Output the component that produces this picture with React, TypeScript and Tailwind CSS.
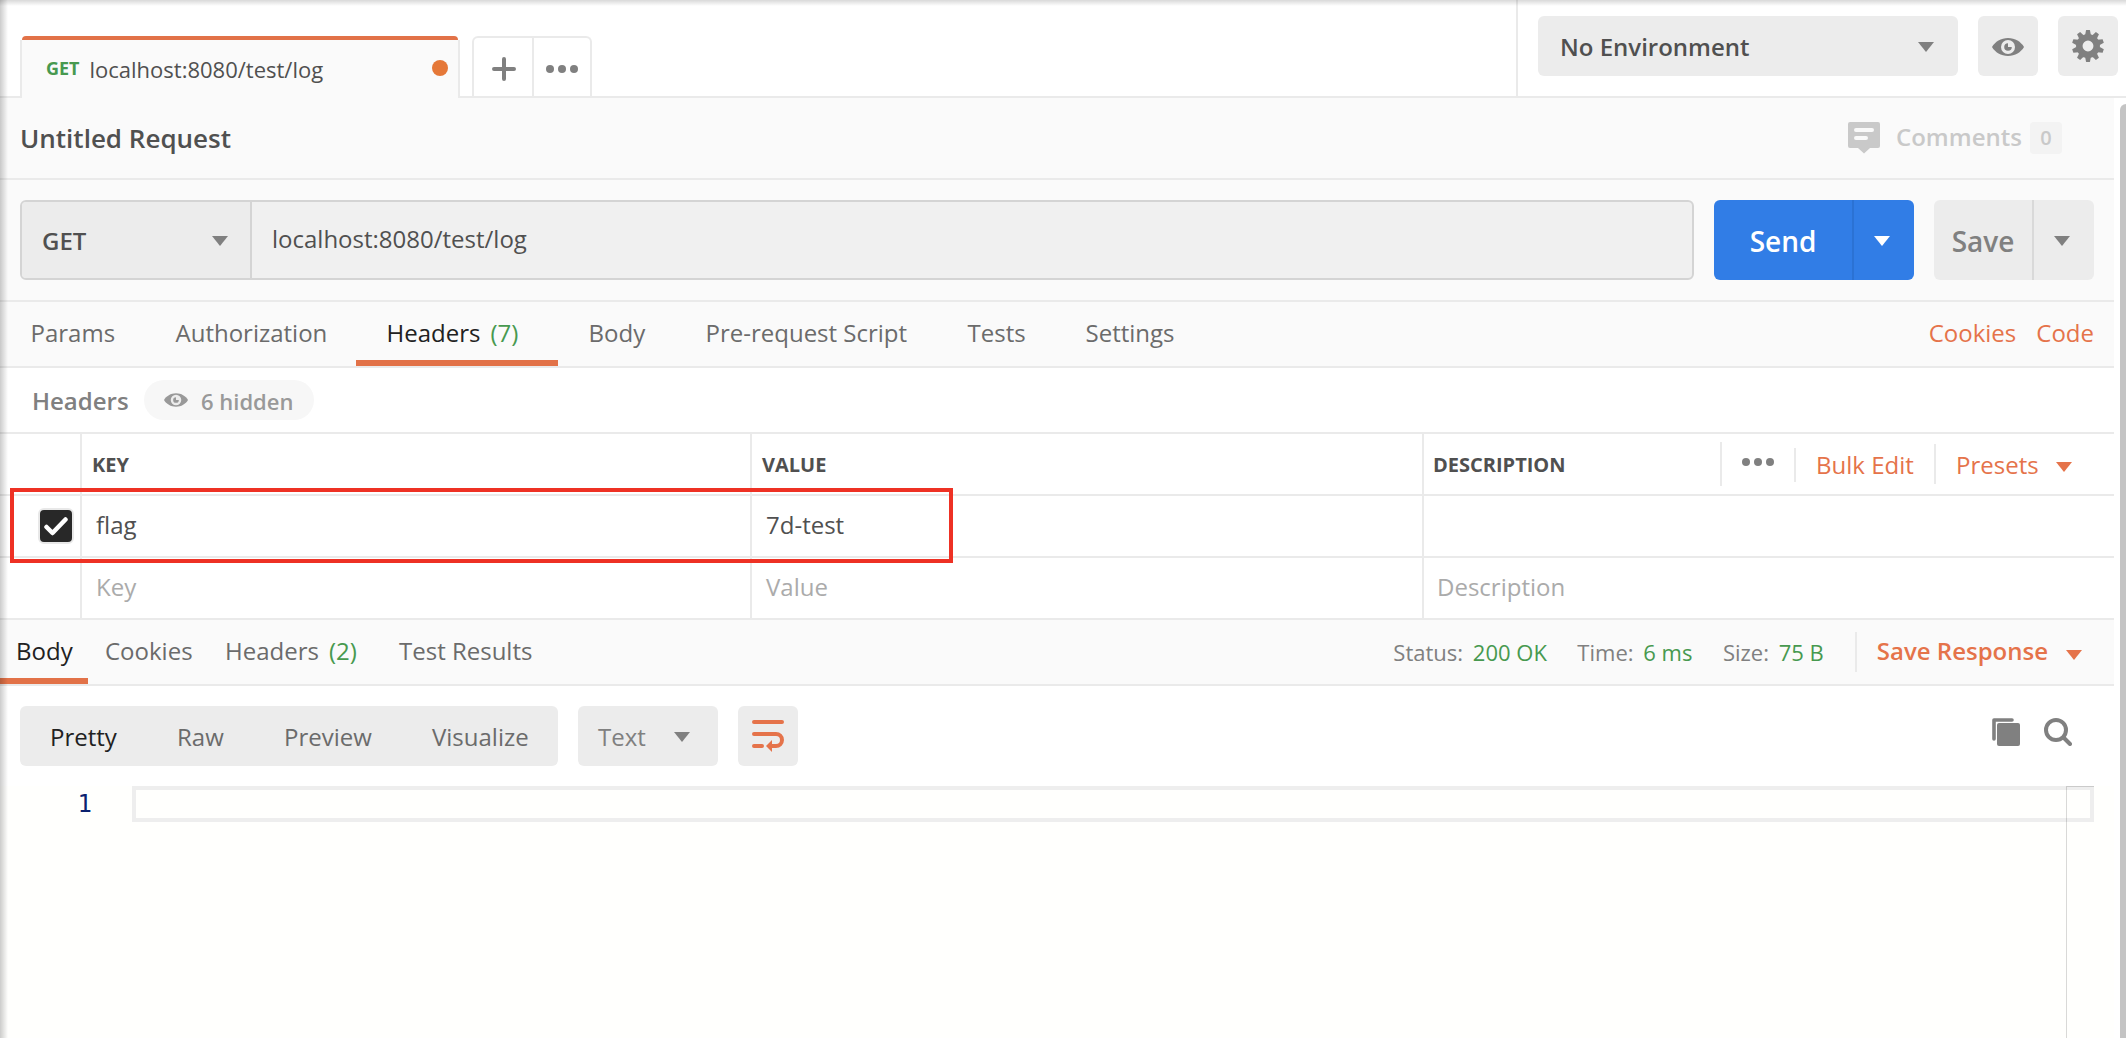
import { useState } from "react";
import type { ReactNode } from "react";

const requestTabs = [
  { name: "Params", width: "w-[145px]" },
  { name: "Authorization", width: "w-[211px]" },
  { name: "Headers", count: 7, width: "w-[202px]" },
  { name: "Body", width: "w-[117px]" },
  { name: "Pre-request Script", width: "w-[262px]" },
  { name: "Tests", width: "w-[118px]" },
  { name: "Settings", width: "w-[150px]" },
];

const responseTabs = [
  { name: "Body", width: "w-[88px] mr-px" },
  { name: "Cookies", width: "w-[120px]" },
  { name: "Headers", count: 2, width: "w-[174px]" },
  { name: "Test Results", width: "w-[170px]" },
];

const viewModes = [
  { name: "Pretty", width: "w-[127px]" },
  { name: "Raw", width: "w-[107px]" },
  { name: "Preview", width: "w-[148px]" },
  { name: "Visualize", width: "w-[156px]" },
];

function Caret({ className = "" }: { className?: string }) {
  return (
    <svg className={`w-4 h-2.5 shrink-0 ${className}`} viewBox="0 0 16 10" fill="currentColor">
      <path d="M0 0h16L8 10z" />
    </svg>
  );
}

function Dots() {
  return (
    <svg className="w-8 h-2 shrink-0" viewBox="0 0 32 8" fill="#808080">
      <circle cx="4" cy="4" r="4" />
      <circle cx="16" cy="4" r="4" />
      <circle cx="28" cy="4" r="4" />
    </svg>
  );
}

function EyeIcon({ className = "" }: { className?: string }) {
  return (
    <svg className={className} viewBox="0 0 32 18">
      <path
        d="M16 0C9 0 3 3.800 0 9c3 5.200 9 9 16 9s13-3.800 16-9C29 3.800 23 0 16 0z"
        fill="currentColor"
      />
      <circle cx="16" cy="9" r="7" fill="#ececec" />
      <path d="M16 5.200a3.800 3.800 0 1 0 3.800 3.800H16z" fill="currentColor" />
    </svg>
  );
}

function GearIcon() {
  return (
    <svg className="w-8 h-8" viewBox="-16 -16 32 32" fill="#808080">
      {Array.from({ length: 10 }, (_, i) => (
        <path key={i} d="M-2.900-11L-1.900-16h3.800L2.900-11z" transform={`rotate(${i * 36})`} />
      ))}
      <circle r="8.700" fill="none" stroke="#808080" strokeWidth="6.500" />
    </svg>
  );
}

function CommentIcon() {
  return (
    <svg className="w-8 h-8" viewBox="0 0 32 32">
      <path
        d="M2 0h28a2 2 0 0 1 2 2v22a2 2 0 0 1-2 2h-8l-6 5.500L10 26H2a2 2 0 0 1-2-2V2a2 2 0 0 1 2-2z"
        fill="#c9c9c9"
      />
      <path d="M8 8h16M8 16h10" stroke="#fafafa" strokeWidth="4" strokeLinecap="round" />
    </svg>
  );
}

function WrapIcon() {
  return (
    <svg className="w-8 h-8" viewBox="0 0 32 32" fill="none" stroke="#e5734a" strokeWidth="4">
      <path d="M2 2h28M2 14h22a6 6 0 0 1 0 12h-4M2 26h8" strokeLinecap="round" />
      <path d="M20 20v12l-6-6z" fill="#e5734a" stroke="none" />
    </svg>
  );
}

function CopyIcon() {
  return (
    <svg className="w-7 h-7" viewBox="0 0 28 28" fill="#808080">
      <rect x="5" y="5" width="23" height="23" rx="2" />
      <path d="M2 21V2h18" fill="none" stroke="#808080" strokeWidth="3.600" strokeLinecap="round" strokeLinejoin="round" />
    </svg>
  );
}

function SearchIcon() {
  return (
    <svg className="w-7 h-7" viewBox="0 0 28 28" fill="none" stroke="#808080" strokeWidth="4">
      <circle cx="12" cy="12" r="10" />
      <path d="M19.500 19.500l6.500 6.500" strokeLinecap="round" />
    </svg>
  );
}

function Count({ children }: { children: ReactNode }) {
  return <span className="ml-[10px] text-[#47994f]">({children})</span>;
}

function TopBar() {
  return (
    <header className="flex h-[98px] bg-white">
      <div className="w-5 border-b-2 border-[#eaeaea]" />
      <div className="flex flex-col w-[440px]">
        <div className="h-9" />
        <div className="mx-0.5 h-1 rounded-t-[4px] bg-[#e27248]" />
        <div className="flex flex-1 items-center border-x-2 border-[#eaeaea] bg-[#fafafa] pl-6 pr-2.5">
          <span className="w-[43.5px] pb-px text-[18px] font-bold text-[#47994f]">GET</span>
          <span className="flex-1 text-[22px] text-[#505050] pt-px">localhost:8080/test/log</span>
          <span className="size-4 mb-0.5 rounded-full bg-[#e57838]" />
        </div>
      </div>
      <div className="w-3 border-b-2 border-[#eaeaea]" />
      <div className="flex flex-1 items-end border-b-2 border-[#eaeaea]">
        <div className="flex w-[120px] h-[60px] rounded-t-[6px] border-2 border-b-0 border-[#eaeaea]">
          <button className="flex w-[60px] items-center justify-center border-r-2 border-[#eaeaea] pt-1 pl-0.5">
            <svg className="w-6 h-6" viewBox="0 0 24 24" stroke="#808080" strokeWidth="4" strokeLinecap="round">
              <path d="M12 2v20M2 12h20" />
            </svg>
          </button>
          <button className="flex flex-1 items-center justify-center pt-1">
            <Dots />
          </button>
        </div>
      </div>
      <div className="flex w-[610px] justify-end gap-5 border-b-2 border-l-2 border-[#eaeaea] pt-4 pr-2">
        <button className="flex h-[60px] w-[420px] items-center justify-between rounded-[6px] bg-[#ececec] pl-[22px] pr-6 text-2xl font-semibold text-[#505050]">
          <span className="pt-0.5">No Environment</span>
          <Caret className="mt-0.5 text-[#808080]" />
        </button>
        <button className="flex size-[60px] items-center justify-center rounded-[6px] bg-[#ececec] pt-0.5 text-[#808080]">
          <EyeIcon className="w-8 h-[18px]" />
        </button>
        <button className="flex size-[60px] items-center justify-center rounded-[6px] bg-[#ececec]">
          <GearIcon />
        </button>
      </div>
    </header>
  );
}

function TitleRow() {
  return (
    <div className="flex h-[82px] items-center justify-between border-b-2 border-[#eaeaea] bg-[#fafafa] pl-5 pr-[52px]">
      <h1 className="text-[26px] font-semibold text-[#505050]">Untitled Request</h1>
      <div className="flex items-center">
        <CommentIcon />
        <span className="ml-4 w-[134px] pb-[3px] text-2xl font-semibold text-[#c9c9c9]">Comments</span>
        <span className="flex size-8 items-center justify-center rounded-[4px] bg-[#f3f3f3] text-xl font-semibold text-[#c9c9c9]">
          0
        </span>
      </div>
    </div>
  );
}

function UrlBar() {
  return (
    <div className="flex h-[122px] gap-5 border-b-2 border-[#eaeaea] bg-[#fafafa] px-5 pt-5">
      <div className="flex h-20 flex-1 overflow-hidden rounded-[6px] border-2 border-[#d4d4d4] bg-[#f0f0f0] text-2xl text-[#505050]">
        <button className="flex w-[230px] items-center justify-between border-r-2 border-[#d4d4d4] bg-[#ececec] pl-5 pr-[22px]">
          <span className="pt-0.5 font-semibold">GET</span>
          <Caret className="mt-0.5 text-[#808080]" />
        </button>
        <span className="flex items-center pl-5 pb-0.5">localhost:8080/test/log</span>
      </div>
      <div className="flex h-20 w-[200px] overflow-hidden rounded-[6px] bg-[#317de6] text-white">
        <button className="w-[140px] border-r-2 border-[#2b72d4] pt-0.5 text-[28px] font-semibold">Send</button>
        <button className="flex flex-1 items-center justify-center pt-0.5 pr-1">
          <Caret />
        </button>
      </div>
      <div className="flex h-20 w-[160px] overflow-hidden rounded-[6px] bg-[#ececec] text-[#808080]">
        <button className="w-[100px] border-r-2 border-[#d9d9d9] pt-0.5 text-[28px] font-semibold">Save</button>
        <button className="flex flex-1 items-center justify-center pt-0.5 pr-1">
          <Caret />
        </button>
      </div>
    </div>
  );
}

function RequestTabs() {
  const [active, setActive] = useState("Headers");
  return (
    <div className="flex h-[66px] justify-between border-b-2 border-[#eaeaea] bg-[#fafafa] pr-5 text-2xl">
      <div className="flex">
        {requestTabs.map((tab) => (
          <button
            key={tab.name}
            onClick={() => setActive(tab.name)}
            className={`flex items-center whitespace-nowrap border-b-6 pl-[30.5px] pt-1 ${tab.width} ${
              active === tab.name ? "border-[#e27248] text-[#212121]" : "border-transparent text-[#6b6b6b]"
            }`}
          >
            {tab.name}
            {tab.count && <Count>{tab.count}</Count>}
          </button>
        ))}
      </div>
      <div className="flex items-center gap-5 pb-0.5 text-[#e5734a]">
        <a>Cookies</a>
        <a>Code</a>
      </div>
    </div>
  );
}

function HeadersTable() {
  const grid = "grid grid-cols-[82px_670px_672px_1fr] border-b-2 border-[#eaeaea]";
  const cell = "flex items-center border-r-2 border-[#eaeaea]";
  return (
    <section className="relative bg-white">
      <div className="flex h-[66px] items-center border-b-2 border-[#eaeaea] pl-8 text-2xl font-semibold">
        <span className="w-[112px] pt-0.5 text-[#808080]">Headers</span>
        <span className="flex h-10 w-[170px] items-center rounded-full bg-[#f7f7f7] pl-5 text-[#999999]">
          <EyeIcon className="w-6 h-3.5" />
          <span className="pl-[13px] pt-[3px] text-[22px]">6 hidden</span>
        </span>
      </div>

      <div className={`${grid} h-[62px] text-xl font-bold text-[#505050]`}>
        <div className={cell} />
        <div className={`${cell} pl-2.5 pt-0.5`}>KEY</div>
        <div className={`${cell} pl-2.5 pt-0.5`}>VALUE</div>
        <div className="flex items-center pl-[9px]">
          <span className="w-[287px] pt-0.5">DESCRIPTION</span>
          <span className="flex h-11 w-[74px] items-center border-l-2 border-[#eaeaea] pl-5 pb-1">
            <Dots />
          </span>
          <span className="mt-0.5 flex h-[34px] w-[140px] items-center border-l-2 border-[#eaeaea] pl-5 text-2xl font-normal text-[#e5734a]">
            Bulk Edit
          </span>
          <span className="flex h-10 flex-1 items-center border-l-2 border-[#eaeaea] pl-5 text-2xl font-normal text-[#e5734a]">
            <span className="pt-0.5">Presets</span>
            <Caret className="ml-[17px] mt-1.5" />
          </span>
        </div>
      </div>

      <div className={`${grid} h-[62px] text-2xl text-[#505050]`}>
        <div className={`${cell} justify-end pr-1.5`}>
          <span className="flex size-9 items-center justify-center rounded-[6px] border-2 border-[#e8e8e8] bg-[#282828]">
            <svg className="w-6 h-5" viewBox="0 0 24 20" fill="none" stroke="#ffffff" strokeWidth="4.500" strokeLinecap="round" strokeLinejoin="round">
              <path d="M2.500 11l6 6L21.500 3.500" />
            </svg>
          </span>
        </div>
        <div className={`${cell} pl-3.5 pb-0.5`}>flag</div>
        <div className={`${cell} pl-3.5 pb-0.5`}>7d-test</div>
        <div />
      </div>

      <div className={`${grid} h-[62px] text-2xl text-[#ababab]`}>
        <div className={cell} />
        <div className={`${cell} pl-3.5 pb-0.5`}>Key</div>
        <div className={`${cell} pl-3.5 pb-0.5`}>Value</div>
        <div className="flex items-center pl-[13px] pb-0.5">Description</div>
      </div>

      {/* highlight around the flag header */}
      <div className="pointer-events-none absolute left-2.5 top-[120px] h-[75px] w-[943px] border-4 border-[#ee3124]" />
    </section>
  );
}

function Stat({ label, value }: { label: string; value: string }) {
  return (
    <span className="text-[#808080]">
      {label}: <span className="ml-1 text-[#47994f]">{value}</span>
    </span>
  );
}

function ResponseBar() {
  const [active, setActive] = useState("Body");
  return (
    <div className="flex h-[66px] justify-between border-b-2 border-[#eaeaea] bg-[#fafafa] text-2xl">
      <div className="flex">
        {responseTabs.map((tab) => (
          <button
            key={tab.name}
            onClick={() => setActive(tab.name)}
            className={`flex items-center whitespace-nowrap border-b-6 pl-4 pt-1 ${tab.width} ${
              active === tab.name ? "border-[#e27248] text-[#212121]" : "border-transparent text-[#6b6b6b]"
            }`}
          >
            {tab.name}
            {tab.count && <Count>{tab.count}</Count>}
          </button>
        ))}
      </div>
      <div className="flex items-center pr-8">
        <div className="flex gap-[30.5px] pr-[31px] pt-px text-[22px]">
          <Stat label="Status" value="200 OK" />
          <Stat label="Time" value="6 ms" />
          <Stat label="Size" value="75 B" />
        </div>
        <button className="flex h-10 items-center border-l-2 border-[#eaeaea] pl-5 pb-0.5 font-semibold text-[#e5734a]">
          Save Response
          <Caret className="ml-[18px] mt-2" />
        </button>
      </div>
    </div>
  );
}

function ResponseBody() {
  const [mode, setMode] = useState("Pretty");
  return (
    <section className="flex flex-1 flex-col bg-white">
      <div className="flex h-[100px] items-center gap-5 pl-5 pr-[42px] text-2xl">
        <div className="flex h-[60px] w-[538px] rounded-[6px] bg-[#ececec]">
          {viewModes.map((m) => (
            <button
              key={m.name}
              onClick={() => setMode(m.name)}
              className={`pl-[30px] pt-0.5 text-left ${m.width} ${mode === m.name ? "text-[#212121]" : "text-[#6b6b6b]"}`}
            >
              {m.name}
            </button>
          ))}
        </div>
        <button className="flex h-[60px] w-[140px] items-center justify-between rounded-[6px] bg-[#ececec] pl-5 pr-7 text-[#808080]">
          <span className="pt-0.5">Text</span>
          <Caret className="mt-0.5" />
        </button>
        <button className="flex size-[60px] items-center justify-center rounded-[6px] bg-[#ececec]">
          <WrapIcon />
        </button>
        <div className="ml-auto flex gap-6 pb-2">
          <CopyIcon />
          <SearchIcon />
        </div>
      </div>

      <div className="relative flex flex-1 bg-[#fffffd] pr-5">
        <div className="w-[132px] pr-10 text-right font-['DejaVu_Sans_Mono',monospace] text-2xl leading-9 text-[#0b216f]">1</div>
        <div className="h-9 flex-1 border-4 border-[#eeeeee]" />
        {/* minimap gutter */}
        <div className="absolute right-5 top-0 h-full w-7 border-l border-t border-black/15" />
      </div>
    </section>
  );
}

export default function App() {
  return (
    <div className="relative flex h-[1038px] w-[2126px] flex-col overflow-hidden bg-white font-['Open_Sans',sans-serif]">
      <TopBar />
      <div className="flex flex-1">
        <main className="flex w-[2114px] flex-col">
          <TitleRow />
          <UrlBar />
          <RequestTabs />
          <HeadersTable />
          <ResponseBar />
          <ResponseBody />
        </main>
        <div className="mt-1.5 ml-1.5 flex-1 rounded-tl-[6px] bg-[#c4c4c4]" />
      </div>

      {/* shadows cast by the window edges */}
      <div className="pointer-events-none absolute inset-y-0 left-0 w-2 bg-linear-to-r from-black/20 to-transparent" />
      <div className="pointer-events-none absolute inset-x-0 top-0 h-1.5 bg-linear-to-b from-black/15 to-transparent" />
    </div>
  );
}
